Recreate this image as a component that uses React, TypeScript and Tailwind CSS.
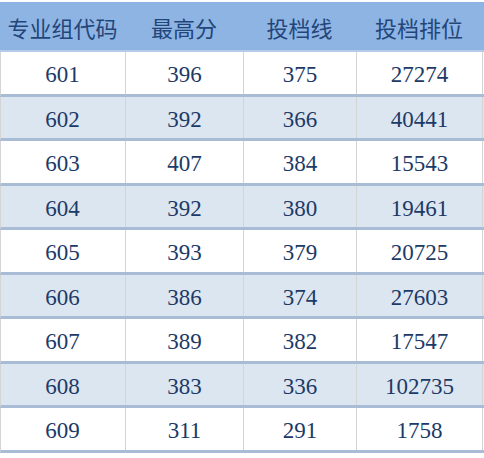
const rows = [
  ["601", "396", "375", "27274"],
  ["602", "392", "366", "40441"],
  ["603", "407", "384", "15543"],
  ["604", "392", "380", "19461"],
  ["605", "393", "379", "20725"],
  ["606", "386", "374", "27603"],
  ["607", "389", "382", "17547"],
  ["608", "383", "336", "102735"],
  ["609", "311", "291", "1758"],
]

const headers = ["专业组代码", "最高分", "投档线", "投档排位"]

const cols = "grid grid-cols-[125px_118px_113px_126px]"

export default function App() {
  return (
    <div className="w-[484px] h-[458px] overflow-hidden bg-white pt-[2px] font-['Liberation_Serif','Noto_Sans_CJK_SC',serif]">
      <div className={`${cols} w-[484px] h-[50px] bg-[#8eb4e3] items-center border-b-2 border-[#b6cbe8]`}>
        {headers.map((h) => (
          <div key={h} className="pt-[2px] text-center text-[22px] text-[#23467a] font-['Noto_Sans_CJK_SC',serif]">
            {h}
          </div>
        ))}
      </div>
      {rows.map((r, i) => (
        <div
          key={r[0]}
          className={`${cols} h-[44.5px] border-b-[3px] border-[#a9bcd6] border-l border-l-[#d4d4d4] ${
            i % 2 === 1 ? "bg-[#dce6f1]" : "bg-white"
          }`}
        >
          {r.map((c, j) => (
            <div
              key={j}
              className={`flex items-center justify-center pt-[5px] text-[23px] text-[#1c3a66] border-r border-[#d4d4d4] ${
                j === 0 ? "-ml-px" : ""
              }`}
            >
              {c}
            </div>
          ))}
        </div>
      ))}
    </div>
  )
}
